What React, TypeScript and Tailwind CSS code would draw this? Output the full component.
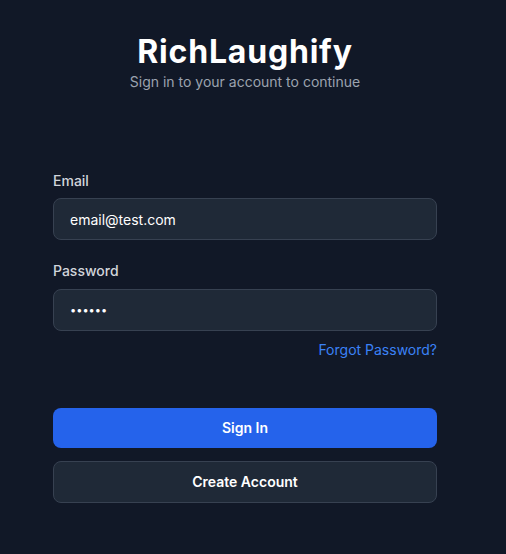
export default function App() {
  return (
    <div
      className="min-h-screen w-full bg-[#111827] pr-4 text-white"
      style={{ fontFamily: "Inter, 'Noto Sans', sans-serif" }}
    >
      <div className="mx-auto flex w-[384px] flex-col pt-[34px]">
        <div className="text-center">
          <h1 className="text-[32px] font-bold leading-9 tracking-[0.025em]">RichLaughify</h1>
          <p className="mt-0.5 text-sm text-[#9ca3af]">Sign in to your account to continue</p>
        </div>

        <form className="mt-[79px] flex flex-col" onSubmit={(e) => e.preventDefault()}>
          <label className="mb-[7px] text-sm font-medium text-[#d1d5db]">Email</label>
          <input
            type="email"
            readOnly
            value="email@test.com"
            className="h-[42px] w-full rounded-lg border border-[#374151] bg-[#1f2937] px-4 text-sm text-white outline-none"
          />

          <label className="mt-[21px] mb-2 text-sm font-medium text-[#d1d5db]">Password</label>
          <input
            type="password"
            readOnly
            value="123456"
            className="h-[42px] w-full rounded-lg border border-[#374151] bg-[#1f2937] px-4 text-[11px] text-white outline-none"
          />

          <div className="mt-[9px] flex justify-end">
            <a href="#" className="text-sm text-[#3b82f6]">
              Forgot Password?
            </a>
          </div>

          <button
            type="submit"
            className="mt-12 h-10 w-full rounded-lg bg-[#2563eb] text-sm font-semibold text-white"
          >
            Sign In
          </button>
          <button
            type="button"
            className="mt-[13px] h-[42px] w-full rounded-lg border border-[#374151] bg-[#1f2937] text-sm font-semibold text-white"
          >
            Create Account
          </button>
        </form>
      </div>
    </div>
  );
}
